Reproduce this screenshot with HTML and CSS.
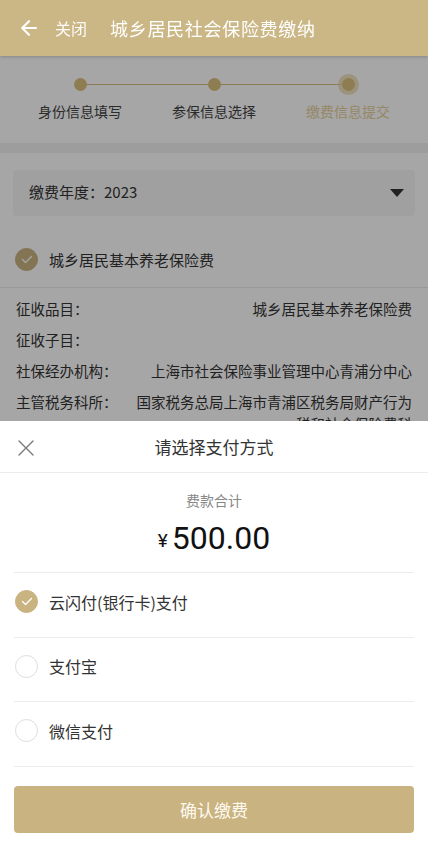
FILE: index.html
```html
<!DOCTYPE html>
<html lang="zh-CN">
<head>
<meta charset="utf-8">
<title>城乡居民社会保险费缴纳</title>
<link rel="stylesheet" href="styles.css">
</head>
<body>
<header class="topbar">
  <svg class="back" width="18" height="18" viewBox="0 0 18 18" fill="none" stroke="#fff" stroke-width="2.2" stroke-linecap="round" stroke-linejoin="round"><path d="M16 9H2.5M9 2.2L2.2 9 9 15.8"/></svg>
  <span class="close">关闭</span>
  <h1 class="title">城乡居民社会保险费缴纳</h1>
</header>

<main class="content">
  <section class="steps">
    <div class="step done"><span class="dot"></span><span class="label">身份信息填写</span></div>
    <div class="step done"><span class="dot"></span><span class="label">参保信息选择</span></div>
    <div class="step current"><span class="dot"></span><span class="label">缴费信息提交</span></div>
  </section>
  <div class="band"></div>
  <section class="form">
    <div class="select">
      <span>缴费年度：2023</span>
      <span class="caret"></span>
    </div>
    <div class="check-row">
      <span class="radio checked"><svg width="12" height="9" viewBox="0 0 12 9" fill="none" stroke="#fff" stroke-width="1.3" stroke-linecap="round" stroke-linejoin="round"><path d="M1.5 4.5l3 3 6-6"/></svg></span>
      <span>城乡居民基本养老保险费</span>
    </div>
  </section>
  <section class="info">
    <div class="row"><span class="k">征收品目：</span><span class="v">城乡居民基本养老保险费</span></div>
    <div class="row"><span class="k">征收子目：</span><span class="v"></span></div>
    <div class="row"><span class="k">社保经办机构：</span><span class="v">上海市社会保险事业管理中心青浦分中心</span></div>
    <div class="row"><span class="k">主管税务科所：</span><span class="v">国家税务总局上海市青浦区税务局财产行为税和社会保险费科</span></div>
  </section>
</main>

<div class="mask"></div>

<section class="sheet">
  <div class="sheet-head">
    <svg class="x" width="16" height="16" viewBox="0 0 16 16" stroke="#7a7a7a" stroke-width="1.4" stroke-linecap="round"><path d="M1 1l14 14M15 1L1 15"/></svg>
    <h2 class="sheet-title">请选择支付方式</h2>
  </div>
  <div class="total">
    <div class="total-label">费款合计</div>
    <div class="amount"><span class="yen">¥</span>500.00</div>
  </div>
  <ul class="methods">
    <li class="method"><span class="radio checked"><svg width="12" height="9" viewBox="0 0 12 9" fill="none" stroke="#fff" stroke-width="1.3" stroke-linecap="round" stroke-linejoin="round"><path d="M1.5 4.5l3 3 6-6"/></svg></span><span>云闪付(银行卡)支付</span></li>
    <li class="method"><span class="radio"></span><span>支付宝</span></li>
    <li class="method"><span class="radio"></span><span>微信支付</span></li>
  </ul>
  <button class="confirm">确认缴费</button>
</section>
</body>
</html>
```

FILE: styles.css
```css
* { box-sizing: border-box; }
html, body { margin: 0; padding: 0; }
body {
  width: 428px;
  height: 866px;
  overflow: hidden;
  background: #fff;
  font-family: "Noto Sans CJK SC", "Noto Sans", sans-serif;
  color: #333;
}

.topbar {
  position: relative;
  z-index: 10;
  height: 56px;
  background: #cbb685;
  display: flex;
  align-items: center;
  padding-left: 20px;
  color: #fff;
  box-shadow: 0 1px 3px rgba(0,0,0,0.18);
}
.back { flex-shrink: 0; }
.close { margin-left: 17px; font-size: 16px; line-height: 20px; opacity: 0.95; }
.title { margin: 0 0 0 23px; font-size: 18px; font-weight: 400; letter-spacing: 0.7px; line-height: 22px; }

.content { background: #fff; }

.steps {
  display: grid;
  grid-template-columns: repeat(3, 1fr);
  padding: 22px 13px 22px;
}
.step {
  position: relative;
  display: flex;
  flex-direction: column;
  align-items: center;
}
.step + .step::before {
  content: "";
  position: absolute;
  top: 6px;
  left: -50%;
  width: 100%;
  height: 1px;
  background: #d4bd83;
}
.dot {
  position: relative;
  z-index: 1;
  width: 13px;
  height: 13px;
  border-radius: 50%;
  background: #dcc07f;
}
.step.current .dot {
  box-shadow: 0 0 0 4px rgba(232, 214, 166, 0.7);
}
.label {
  margin-top: 10px;
  font-size: 14px;
  line-height: 20px;
  color: #444;
}
.step.current .label { color: #e6d09c; }

.band { height: 10px; background: #f2f2f2; }

.form { padding: 17px 13px 0; }
.select {
  height: 46px;
  background: #f6f6f6;
  border-radius: 4px;
  display: flex;
  align-items: center;
  justify-content: space-between;
  padding: 0 11px 4px 16px;
  font-size: 15px;
  color: #333;
}
.caret {
  width: 0; height: 0;
  margin-top: 4px;
  border-left: 7px solid transparent;
  border-right: 7px solid transparent;
  border-top: 8px solid #333;
}
.check-row {
  display: flex;
  align-items: center;
  gap: 11px;
  height: 72px;
  padding-top: 16px;
  font-size: 15px;
  color: #333;
  border-bottom: 1px solid #ececec;
  margin: 0 -13px;
  padding-left: 15px;
}

.radio {
  flex-shrink: 0;
  width: 23px;
  height: 23px;
  border-radius: 50%;
  border: 1px solid #dedede;
  display: flex;
  align-items: center;
  justify-content: center;
  background: #fff;
}
.radio.checked { background: #c9b381; border-color: #c9b381; }

.info { padding: 10px 16px 0; display: flex; flex-direction: column; gap: 9px; }
.row { display: flex; font-size: 14.5px; line-height: 22px; color: #333; }
.k { width: 116px; flex-shrink: 0; white-space: nowrap; }
.v { flex: 1; text-align: right; }

.mask {
  position: fixed;
  inset: 0;
  z-index: 5;
  background: rgba(0,0,0,0.35);
}

.sheet {
  position: fixed;
  left: 0; right: 0; bottom: 0;
  height: 445px;
  z-index: 20;
  background: #fff;
}
.sheet-head {
  position: relative;
  height: 52px;
  display: flex;
  align-items: center;
  justify-content: center;
  border-bottom: 1px solid #ececec;
}
.x { position: absolute; left: 18px; top: 19px; }
.sheet-title { margin: 0; font-size: 17px; font-weight: 400; color: #333; line-height: 22px; }

.total {
  margin: 0 14px;
  padding-top: 17px;
  height: 100px;
  border-bottom: 1px solid #ececec;
  text-align: center;
}
.total-label { font-size: 14px; line-height: 20px; color: #888; }
.amount {
  margin-top: 10px;
  font-family: Roboto, "Noto Sans", sans-serif;
  font-size: 32px;
  line-height: 36px;
  color: #111;
}
.yen { font-size: 19px; margin-right: 4px; vertical-align: 2px; }

.methods { list-style: none; margin: 0 14px; padding: 0; }
.method {
  height: 64.5px;
  display: flex;
  align-items: center;
  gap: 11px;
  padding-left: 1px;
  padding-bottom: 6px;
  font-size: 16px;
  color: #333;
  border-bottom: 1px solid #ececec;
}

.confirm {
  display: block;
  margin: 19px 14px 0;
  width: 400px;
  height: 47px;
  border: 0;
  border-radius: 4px;
  background: #c9b381;
  color: #fffaf0;
  font-family: "Noto Sans CJK SC", sans-serif;
  font-size: 17px;
}
```
